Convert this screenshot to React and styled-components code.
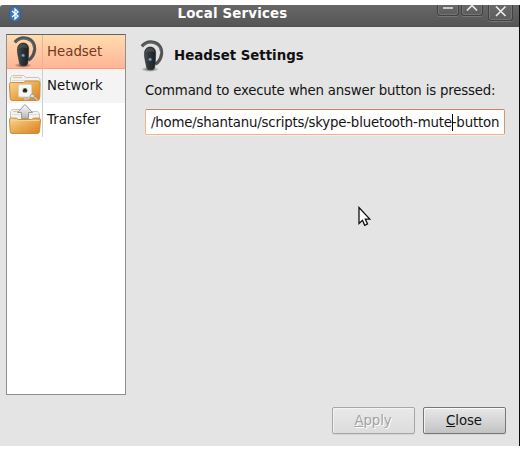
import React from "react";
import styled, { createGlobalStyle } from "styled-components";

const GlobalStyle = createGlobalStyle`
  * { box-sizing: border-box; }
  body { margin: 0; background: #fff; overflow: hidden; }
  svg { display: block; flex: none; }
`;

const Desktop = styled.div`
  width: 520px;
  height: 450px;
  padding: 5px 0 4px;
  background: #fff;
  font-family: "DejaVu Sans", sans-serif;
  font-size: 13.33px;
  line-height: 16px;
  color: #141414;
`;

const Window = styled.div`
  height: 441px;
  display: flex;
  flex-direction: column;
  background: #e4e4e4;
  border-right: 1px solid #0c0c0c;
`;

const TitleBar = styled.header`
  height: 22px;
  flex: none;
  display: grid;
  grid-template-columns: 80px 1fr 80px;
  background: linear-gradient(#676767, #555);
  border-bottom: 1px solid #505050;
  border-top-left-radius: 3px;
  overflow: hidden;
`;

const AppIcon = styled.div`
  padding: 1px 0 0 9px;
`;

const Title = styled.h1`
  margin: 0;
  padding: 1px 54px 0 0;
  justify-self: center;
  white-space: nowrap;
  font-size: 13.33px;
  line-height: 16px;
  letter-spacing: 0.2px;
  color: #fff;
`;

const WindowControls = styled.div`
  display: flex;
  justify-content: flex-end;
  align-items: flex-start;
  padding-right: 6px;
`;

const ControlButton = styled.button`
  width: ${(p) => p.$width}px;
  height: ${(p) => p.$height}px;
  margin: 0 0 0 ${(p) => p.$gap || 0}px;
  padding: 0;
  border: 1px solid #414141;
  border-top: 0;
  border-radius: 0 0 3px 3px;
  background: linear-gradient(#686868, #5d5d5d);
  box-shadow: 0 1px 0 #777, inset 1px 0 #777, inset -1px -1px #747474;
`;

const Body = styled.div`
  flex: 1;
  display: flex;
  padding-left: 6px;
`;

const ServiceList = styled.nav`
  width: 120px;
  height: 361px;
  margin-top: 7px;
  flex: none;
  background: #fff;
  border: 1px solid #8f8f8f;
  border-top-color: #626262;
`;

const Service = styled.div`
  height: 34px;
  display: flex;
  background: ${(p) => p.$background};
  color: ${(p) => p.$color || "#141414"};
  box-shadow: ${(p) => (p.$selected ? "inset 0 -1px #ff9c78" : "none")};
`;

const ServiceIcon = styled.div`
  width: 36px;
  height: 34px;
  flex: none;
  border-right: 1px solid ${(p) => (p.$selected ? "#e7b590" : "#cecece")};
`;

const ServiceName = styled.span`
  padding: 9px 0 0 4px;
`;

const Panel = styled.main`
  flex: 1;
  display: flex;
  flex-direction: column;
  padding: 11px 14px 0 13px;
`;

const PanelHeading = styled.div`
  height: 37px;
  display: flex;
  margin-left: -5px;
`;

const HeadingIcon = styled.div`
  padding-top: 1px;
`;

const HeadingText = styled.h2`
  margin: 0;
  padding: 10px 0 0 5px;
  font-size: 13.33px;
  line-height: 16px;
  color: #111;
`;

const Field = styled.div`
  padding: 7px 0 0 6px;
  letter-spacing: -0.2px;
`;

const FieldLabel = styled.div`
  height: 27px;
  padding-top: 1px;
  white-space: nowrap;
`;

const CommandInput = styled.div`
  width: 360px;
  height: 26px;
  display: flex;
  padding: 4px 0 0 5px;
  white-space: nowrap;
  background: #fff;
  border: 1px solid #efb48f;
  border-top-color: #c98567;
  border-right-color: #d99373;
  border-radius: 2px;
  box-shadow: 0 1px 0 #f7ede7;
`;

const CommandText = styled.span`
  flex: none;
  padding-top: 1px;
`;

const Caret = styled.span`
  width: 1px;
  height: 17px;
  flex: none;
  margin-right: -1px;
  background: #000;
`;

const PointerArea = styled.div`
  padding: 71px 0 0 219px;
`;

const Actions = styled.footer`
  margin-top: auto;
  display: flex;
  justify-content: flex-end;
  gap: 8px;
  padding-bottom: 12px;
  margin-right: -1px;
`;

const ActionButton = styled.button`
  width: 83px;
  height: 27px;
  padding: 1px 1px 0 0;
  font: inherit;
  letter-spacing: -0.1px;
  color: ${(p) => (p.disabled ? "#a2a2a2" : "#141414")};
  text-shadow: ${(p) => (p.disabled ? "1px 1px #fff" : "none")};
  background: ${(p) => (p.disabled ? "linear-gradient(#e9e9e9, #dcdcdc)" : "linear-gradient(#e8e8e8, #d6d6d6 50%, #c3c3c3)")};
  border: 1px solid ${(p) => (p.disabled ? "#a7a7a7" : "#777")};
  border-radius: 2px;
  box-shadow: inset 0 1px ${(p) => (p.disabled ? "#f4f4f4" : "#fafafa")}, inset 1px 0 #f2f2f2, 0 1px #d5d5d5;
`;

const Mnemonic = styled.u`
  text-decoration-thickness: 1px;
  text-underline-offset: 1px;
`;

function BluetoothIcon() {
  return (
    <svg width="12" height="16" viewBox="0 0 12 16">
      <rect x=".5" y=".5" width="11" height="15" rx="5.5" fill="#3f76b8" stroke="#315f9a" />
      <path d="M3 5l6 5-3 3V3l3 3-6 5" fill="none" stroke="#fff" strokeWidth="1.3" />
    </svg>
  );
}

function HeadsetIcon({ id }) {
  return (
    <svg width="35" height="34" viewBox="0 0 35 34">
      <defs>
        <linearGradient id={id}>
          <stop stopColor="#4a4f50" />
          <stop offset=".4" stopColor="#303537" />
          <stop offset="1" stopColor="#1b1f21" />
        </linearGradient>
        <radialGradient id={id + "shade"}>
          <stop stopColor="#222" stopOpacity=".8" />
          <stop offset="1" stopColor="#333" stopOpacity="0" />
        </radialGradient>
      </defs>
      <ellipse cx="16" cy="30.3" rx="9" ry="2.6" fill={`url(#${id}shade)`} />
      <path d="M7.8 7.3C11 3.8 15.6 2.3 19.8 3.4c5.6 1.4 8.4 6.1 7.7 11.8-.6 4.6-2.8 8-6.3 10" fill="none" stroke="#505354" strokeWidth="3.2" />
      <path d="M8.3 7.5c3.3-3 7.5-4.3 11.1-3.4 5 1.3 7.8 5.7 7.1 10.9" fill="none" stroke="#747777" strokeWidth=".8" />
      <path d="M16.2 8c3.7 0 5.6 2.5 5.5 6.4-.1 5.2-.4 10-1 13.8-.3 1.7-1.6 2.5-4 2.5s-3.7-.8-4.1-2.5c-.9-4.6-2.2-9.6-2.2-13.2 0-4.4 2.2-7 5.8-7z" fill={`url(#${id})`} stroke="#292d2f" strokeWidth=".6" />
      <path d="M11.7 13q.8-4 4.5-4 3.9 0 4.4 4-4.2-1-8.9 0z" fill="#6b7071" opacity=".4" />
      <circle cx="16.1" cy="20.4" r="1.7" fill="#4b80b8" />
      <circle cx="16" cy="20.2" r=".7" fill="#a0c5e8" />
    </svg>
  );
}

function FolderGradient({ id }) {
  return (
    <linearGradient id={id} x2="1" y2="1">
      <stop stopColor="#fbd795" />
      <stop offset=".5" stopColor="#e9aa50" />
      <stop offset="1" stopColor="#d88021" />
    </linearGradient>
  );
}

function NetworkIcon() {
  return (
    <svg width="36" height="34" viewBox="0 0 36 34">
      <defs><FolderGradient id="netFolder" /></defs>
      <path d="M3.5 27V8.5l2-2h11l2 2h13l1.5 1.5V28h-29.5z" fill="#f4f4f2" stroke="#c4c4c2" />
      <path d="M6 8.5h9" stroke="#f0c08a" strokeWidth="1.2" />
      <path d="M5 11.5h27" stroke="#ddd" />
      <path d="M2.5 15.5q0-2 2-2h12l2-1.5h12.5q2 0 2 2L32.5 29.5q-.2 2-2 2H5q-1.6 0-1.8-2z" fill="url(#netFolder)" stroke="#cc8d3c" />
      <rect x="11.5" y="15.5" width="13" height="12.5" rx="1.5" fill="#f6f6f2" stroke="#dcd5c5" />
      <rect x="15.5" y="19" width="5" height="5" rx="2" fill="#8a8c80" />
      <path d="M16 22.8v-2h1v-1h2v1h1v2z" fill="#171c17" />
      <path d="M17 30q3.5 1 6-1.5M27 28l3.5 3" fill="none" stroke="#a3a19c" strokeWidth="2.2" />
      <path d="M17 30q3.5 1 6-1.5M27 28l3.5 3" fill="none" stroke="#dededb" strokeWidth="1" />
      <ellipse cx="25.3" cy="27" rx="2.3" ry="1.8" fill="#deddd7" stroke="#969691" strokeWidth=".8" />
    </svg>
  );
}

function TransferIcon() {
  return (
    <svg width="36" height="34" viewBox="0 0 36 34">
      <defs>
        <FolderGradient id="transferFolder" />
        <linearGradient id="arrow" x2="0" y2="1">
          <stop stopColor="#fff" /><stop offset="1" stopColor="#b4b4b4" />
        </linearGradient>
      </defs>
      <path d="M3.5 27V8.5l2-2h11l2 2h12l2 2V28h-29z" fill="#f4f4f2" stroke="#c4c4c2" />
      <path d="M6 8.5h7" stroke="#f0c08a" strokeWidth="1.2" />
      <path d="M5 11.5h27" stroke="#ddd" />
      <path d="M18 1.5l7.5 8h-4v6h-7v-6h-4z" fill="url(#arrow)" stroke="#999" />
      <path d="M2.5 17q-.2-2 2-2l5 .2 2 1.3h13l2-1.3 5-.2q2 0 2 2L32.5 28.5q-.2 2-2 2H5q-1.6 0-1.8-2z" fill="url(#transferFolder)" stroke="#cc8d3c" />
      <path d="M3.5 17.5h29" stroke="#f9d28c" />
    </svg>
  );
}

function ControlGlyph({ width, height, path }) {
  return (
    <svg width={width} height={height} viewBox={`0 0 ${width} ${height}`}>
      <path d={path} fill="none" stroke="#e9e9e9" strokeWidth="1.7" />
    </svg>
  );
}

function Pointer() {
  return (
    <svg width="13" height="22" viewBox="0 0 13 22">
      <path d="M1 1.5v16l3.5-3.2 2.2 5 2.8-1.3-2.2-4.9h4.5z" fill="#fff" stroke="#111" strokeWidth="1.3" />
    </svg>
  );
}

export default function App() {
  return (
    <Desktop>
      <GlobalStyle />
      <Window>
        <TitleBar>
          <AppIcon><BluetoothIcon /></AppIcon>
          <Title>Local Services</Title>
          <WindowControls>
            <ControlButton $width={22} $height={11} aria-label="Minimize">
              <ControlGlyph width={20} height={10} path="M5 3h10" />
            </ControlButton>
            <ControlButton $width={22} $height={11} $gap={2} aria-label="Maximize">
              <ControlGlyph width={20} height={10} path="M5 5.5l5-5 5 5" />
            </ControlButton>
            <ControlButton $width={25} $height={16} $gap={5} aria-label="Close">
              <ControlGlyph width={23} height={15} path="M7 1.5l9.5 9.5M16.5 1.5L7 11" />
            </ControlButton>
          </WindowControls>
        </TitleBar>
        <Body>
          <ServiceList>
            <Service $background="linear-gradient(#ffdcae, #ffb496)" $color="#74391f" $selected>
              <ServiceIcon $selected><HeadsetIcon id="listHeadset" /></ServiceIcon>
              <ServiceName>Headset</ServiceName>
            </Service>
            <Service $background="#f4f4f4">
              <ServiceIcon><NetworkIcon /></ServiceIcon>
              <ServiceName>Network</ServiceName>
            </Service>
            <Service $background="#fff">
              <ServiceIcon><TransferIcon /></ServiceIcon>
              <ServiceName>Transfer</ServiceName>
            </Service>
          </ServiceList>
          <Panel>
            <PanelHeading>
              <HeadingIcon><HeadsetIcon id="panelHeadset" /></HeadingIcon>
              <HeadingText>Headset Settings</HeadingText>
            </PanelHeading>
            <Field>
              <FieldLabel>Command to execute when answer button is pressed:</FieldLabel>
              <CommandInput>
                <CommandText>/home/shantanu/scripts/skype-bluetooth-mute</CommandText>
                <Caret />
                <CommandText>-button</CommandText>
              </CommandInput>
            </Field>
            <PointerArea><Pointer /></PointerArea>
            <Actions>
              <ActionButton disabled><Mnemonic>A</Mnemonic>pply</ActionButton>
              <ActionButton><Mnemonic>C</Mnemonic>lose</ActionButton>
            </Actions>
          </Panel>
        </Body>
      </Window>
    </Desktop>
  );
}
